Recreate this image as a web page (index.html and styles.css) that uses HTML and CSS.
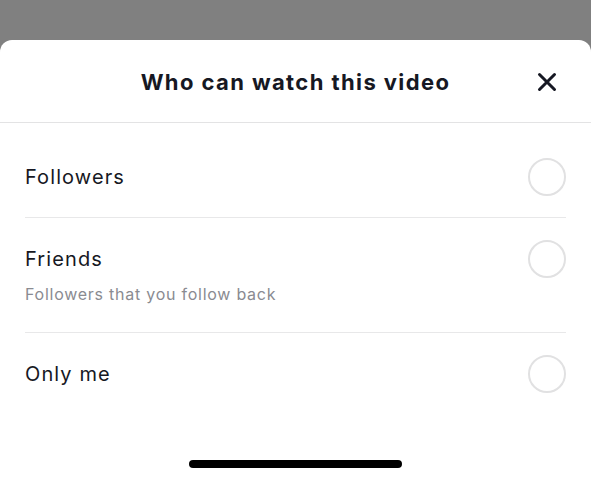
FILE: index.html
```html
<!DOCTYPE html>
<html>
<head>
<meta charset="utf-8">
<link rel="stylesheet" href="styles.css">
</head>
<body>
<div class="overlay"></div>
<div class="sheet">
  <div class="header">
    <div class="title">Who can watch this video</div>
    <div class="close">
      <svg width="20" height="20" viewBox="0 0 20 20"><path d="M2.5 2.5 L17.5 17.5 M17.5 2.5 L2.5 17.5" stroke="#161823" stroke-width="3" stroke-linecap="round" fill="none"/></svg>
    </div>
  </div>
  <div class="list">
    <div class="row">
      <div class="texts"><div class="label">Followers</div></div>
      <div class="radio"></div>
    </div>
    <div class="row">
      <div class="texts"><div class="label">Friends</div><div class="sub">Followers that you follow back</div></div>
      <div class="radio"></div>
    </div>
    <div class="row last">
      <div class="texts"><div class="label">Only me</div></div>
      <div class="radio"></div>
    </div>
  </div>
  <div class="home-bar"></div>
</div>
</body>
</html>
```
FILE: styles.css
```css
html, body { margin: 0; padding: 0; }
body {
  background: #808080;
  font-family: Inter, "Liberation Sans", sans-serif;
  color: #161823;
  width: 591px;
  height: 481px;
  overflow: hidden;
}
.overlay { height: 40px; }
.sheet {
  background: #fff;
  border-radius: 12px 12px 0 0;
  height: 441px;
  display: flex;
  flex-direction: column;
}
.header {
  height: 82px;
  border-bottom: 1px solid #e3e3e4;
  display: flex;
  align-items: center;
  justify-content: center;
  position: relative;
}
.title {
  font-size: 22px;
  font-weight: 700;
  letter-spacing: 1.4px;
  margin-top: 1px;
}
.close {
  position: absolute;
  right: 34px;
  top: 32px;
  width: 20px;
  height: 20px;
}
.close svg { display: block; }
.list { padding: 13px 25px 0; }
.row {
  display: flex;
  align-items: flex-start;
  justify-content: space-between;
  padding: 29px 0 28px;
  border-bottom: 1px solid #e8e8e9;
}
.row.last { border-bottom: none; }
.label {
  font-size: 20px;
  line-height: 24px;
  letter-spacing: 1.1px;
}
.sub {
  font-size: 16px;
  line-height: 20px;
  letter-spacing: 0.75px;
  color: #8a8b91;
  margin-top: 13px;
}
.radio {
  width: 34px;
  height: 34px;
  border: 2px solid #e1e1e2;
  border-radius: 50%;
  margin: -7px 0;
}
.home-bar {
  width: 213px;
  height: 8px;
  border-radius: 4px;
  background: #000;
  margin: auto auto 13px;
}
```
